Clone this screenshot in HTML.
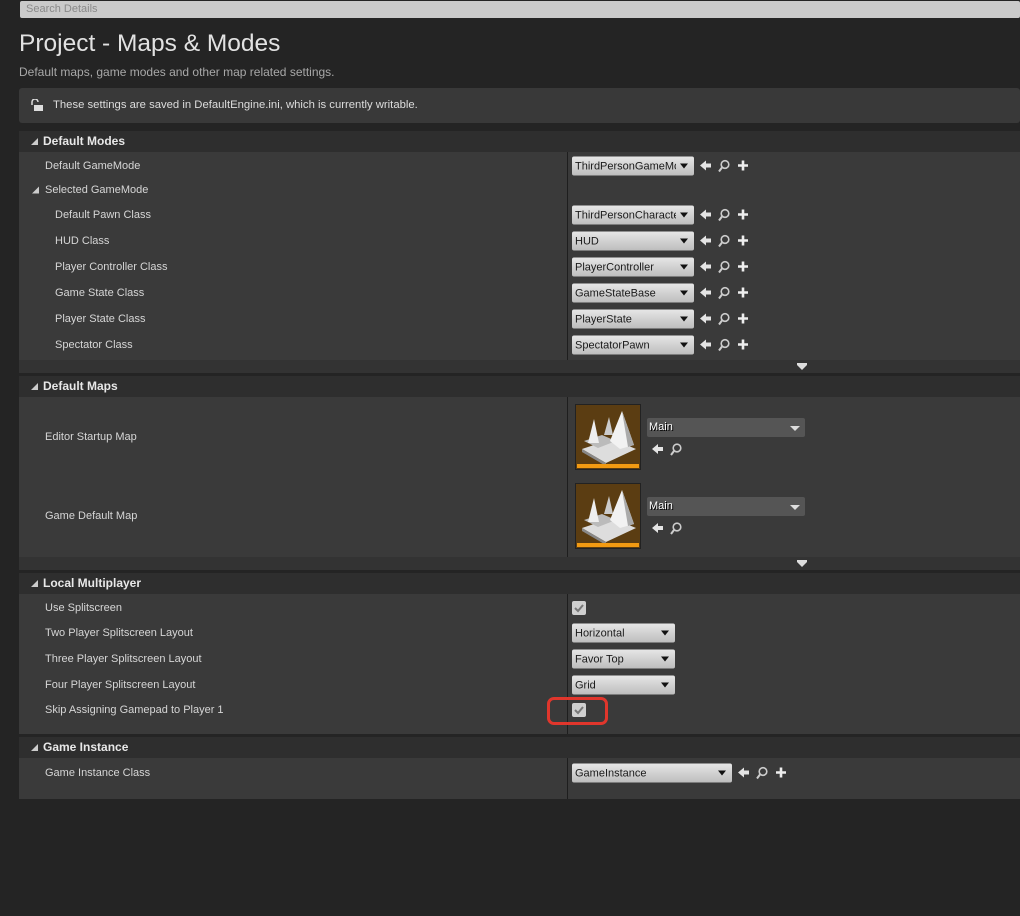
<!DOCTYPE html>
<html><head><meta charset="utf-8"><style>
*{margin:0;padding:0;box-sizing:border-box}
body{width:1020px;height:916px;background:#242424;font-family:"Liberation Sans",sans-serif;position:relative;overflow:hidden;color:#d8d8d8}
.a{position:absolute}
.lbl{position:absolute;font-size:11px;color:#d6d6d6;transform:translateY(-50%)}
.hdr{position:absolute;left:19px;width:1001px;height:21px;background:#2e2e2e;font-size:12px;font-weight:bold;color:#e8e8e8;padding-left:24px;line-height:21px}
.hdr:before{content:"";position:absolute;left:12px;top:7px;border-left:7px solid transparent;border-bottom:7px solid #ccc}
.tri{position:absolute;left:32px;border-left:7px solid transparent;border-bottom:7px solid #ccc;transform:translateY(-50%)}
.body{position:absolute;left:19px;width:1001px;background:#3a3a3a}
.div{position:absolute;left:567px;width:1px;background:#1e1e1e}
.foot{position:absolute;left:19px;width:1001px;height:13px;background:#333}
.foot:after{content:"";position:absolute;left:778px;top:5px;border-left:5px solid transparent;border-right:5px solid transparent;border-top:5px solid #ddd;box-shadow:0 -2px 0 #ddd}
.dd{position:absolute;height:19px;background:linear-gradient(#e6e6e6,#bdbdbd);border-radius:2px;font-size:11px;color:#1a1a1a;line-height:19px;padding:1px 0 0 3px;overflow:hidden;white-space:nowrap;transform:translateY(-50%)}
.dd:after{content:"";position:absolute;right:6px;top:7px;border-left:4.5px solid transparent;border-right:4.5px solid transparent;border-top:5px solid #111}
.dd span{display:block;width:calc(100% - 18px);overflow:hidden;line-height:18px}
.ic{position:absolute;transform:translateY(-50%)}
.map{position:absolute;width:66px;height:66px;background:#5b3d12;border:1px solid #222}
.map:after{content:"";position:absolute;left:1px;right:1px;bottom:1px;height:4px;background:#f29a12}
.mdd{position:absolute;left:647px;width:158px;height:19px;background:#555;border-radius:2px;font-size:11px;color:#fff;line-height:19px;padding-left:2px;text-shadow:1px 1px 0 #000}
.mdd:after{content:"";position:absolute;right:5px;top:8px;border-left:5px solid transparent;border-right:5px solid transparent;border-top:5px solid #ddd}
.cb{position:absolute;left:572px;width:14px;height:14px;background:#cfcfcf;border-radius:2px;transform:translateY(-50%)}
</style></head><body>
<div class="a" style="left:20px;top:1px;width:1000px;height:17px;background:#cacaca;border-radius:2px;font-size:11px;color:#8a8a8a;padding-left:6px;line-height:17px">Search Details</div>
<div class="a" style="left:19px;top:30px;font-size:24.5px;color:#e2e2e2">Project - Maps &amp; Modes</div>
<div class="a" style="left:19px;top:65px;font-size:12px;color:#a8a8a8">Default maps, game modes and other map related settings.</div>
<div class="a" style="left:19px;top:88px;width:1001px;height:35px;background:#393939;border-radius:3px"></div>
<svg class="a" style="left:30px;top:99px" width="14" height="13"><path d="M2 6V3a3 3 0 0 1 6 0" stroke="#ddd" stroke-width="1.5" fill="none"/><rect x="4" y="6" width="9" height="6" fill="#ddd"/></svg>
<div class="a" style="left:53px;top:99px;font-size:11.3px;color:#ddd">These settings are saved in DefaultEngine.ini, which is currently writable.</div>

<svg width="0" height="0" style="position:absolute"><defs>
<g id="icons"><path d="M0 6l6-5v3h5v4H6v3z" fill="#e4e4e4"/><circle cx="25" cy="5" r="3.8" stroke="#ccc" stroke-width="1.6" fill="none"/><path d="M22 8l-3 4" stroke="#ccc" stroke-width="2"/><path d="M38 6h10M43 1v10" stroke="#eee" stroke-width="2.6"/></g>
<g id="icons2"><path d="M0 6l6-5v3h5v4H6v3z" fill="#e4e4e4"/><circle cx="25" cy="5" r="3.8" stroke="#ccc" stroke-width="1.6" fill="none"/><path d="M22 8l-3 4" stroke="#ccc" stroke-width="2"/></g>
<g id="mp"><rect width="64" height="64" fill="#5b3d12"/><path d="M6 44l30-10 24 10-30 14z" fill="#ddd"/><path d="M6 44l24 14v3L6 47z" fill="#888"/><path d="M8 36l18-6 14 6-18 7z" fill="#bbb"/><path d="M12 38l6-24 5 24z" fill="#eee"/><path d="M28 30l5-18 4 18z" fill="#ccc"/><path d="M34 36l12-30 12 34-14 4z" fill="#f2f2f2"/><path d="M46 6l12 34-6 2z" fill="#aaa"/></g>
</defs></svg>

<!-- Default Modes -->
<div class="hdr" style="top:131px">Default Modes</div>
<div class="body" style="top:152px;height:208px"></div>
<div class="div" style="top:152px;height:208px"></div>
<div class="foot" style="top:360px"></div>
<div class="lbl" style="left:45px;top:166px">Default GameMode</div>
<div class="tri" style="top:190px"></div>
<div class="lbl" style="left:45px;top:190px">Selected GameMode</div>
<div class="lbl" style="left:55px;top:215px">Default Pawn Class</div>
<div class="lbl" style="left:55px;top:241px">HUD Class</div>
<div class="lbl" style="left:55px;top:267px">Player Controller Class</div>
<div class="lbl" style="left:55px;top:293px">Game State Class</div>
<div class="lbl" style="left:55px;top:319px">Player State Class</div>
<div class="lbl" style="left:55px;top:345px">Spectator Class</div>
<div class="dd" style="left:572px;top:166px;width:122px"><span>ThirdPersonGameMode</span></div>
<div class="dd" style="left:572px;top:215px;width:122px"><span>ThirdPersonCharacter</span></div>
<div class="dd" style="left:572px;top:241px;width:122px"><span>HUD</span></div>
<div class="dd" style="left:572px;top:267px;width:122px"><span>PlayerController</span></div>
<div class="dd" style="left:572px;top:293px;width:122px"><span>GameStateBase</span></div>
<div class="dd" style="left:572px;top:319px;width:122px"><span>PlayerState</span></div>
<div class="dd" style="left:572px;top:345px;width:122px"><span>SpectatorPawn</span></div>
<svg class="ic" style="left:700px;top:166px" width="52" height="13"><use href="#icons"/></svg>
<svg class="ic" style="left:700px;top:215px" width="52" height="13"><use href="#icons"/></svg>
<svg class="ic" style="left:700px;top:241px" width="52" height="13"><use href="#icons"/></svg>
<svg class="ic" style="left:700px;top:267px" width="52" height="13"><use href="#icons"/></svg>
<svg class="ic" style="left:700px;top:293px" width="52" height="13"><use href="#icons"/></svg>
<svg class="ic" style="left:700px;top:319px" width="52" height="13"><use href="#icons"/></svg>
<svg class="ic" style="left:700px;top:345px" width="52" height="13"><use href="#icons"/></svg>

<!-- Default Maps -->
<div class="hdr" style="top:376px">Default Maps</div>
<div class="body" style="top:397px;height:160px"></div>
<div class="div" style="top:397px;height:160px"></div>
<div class="foot" style="top:557px"></div>
<div class="lbl" style="left:45px;top:437px">Editor Startup Map</div>
<div class="lbl" style="left:45px;top:516px">Game Default Map</div>
<div class="map" style="left:575px;top:404px"><svg width="64" height="64"><use href="#mp"/></svg></div>
<div class="map" style="left:575px;top:483px"><svg width="64" height="64"><use href="#mp"/></svg></div>
<div class="mdd" style="top:418px">Main</div>
<div class="mdd" style="top:497px">Main</div>
<svg class="a" style="left:652px;top:443px" width="40" height="13"><use href="#icons2"/></svg>
<svg class="a" style="left:652px;top:522px" width="40" height="13"><use href="#icons2"/></svg>

<!-- Local Multiplayer -->
<div class="hdr" style="top:573px">Local Multiplayer</div>
<div class="body" style="top:594px;height:140px"></div>
<div class="div" style="top:594px;height:140px"></div>
<div class="lbl" style="left:45px;top:608px">Use Splitscreen</div>
<div class="lbl" style="left:45px;top:633px">Two Player Splitscreen Layout</div>
<div class="lbl" style="left:45px;top:659px">Three Player Splitscreen Layout</div>
<div class="lbl" style="left:45px;top:685px">Four Player Splitscreen Layout</div>
<div class="lbl" style="left:45px;top:710px">Skip Assigning Gamepad to Player 1</div>
<div class="cb" style="top:608px"><svg width="14" height="14"><path d="M3 7l3 3 5-6" stroke="#777" stroke-width="2" fill="none"/></svg></div>
<div class="cb" style="top:710px"><svg width="14" height="14"><path d="M3 7l3 3 5-6" stroke="#777" stroke-width="2" fill="none"/></svg></div>
<div class="dd" style="left:572px;top:633px;width:103px"><span>Horizontal</span></div>
<div class="dd" style="left:572px;top:659px;width:103px"><span>Favor Top</span></div>
<div class="dd" style="left:572px;top:685px;width:103px"><span>Grid</span></div>
<div class="a" style="left:547px;top:697px;width:61px;height:28px;border:3px solid #e0362c;border-radius:7px"></div>

<!-- Game Instance -->
<div class="hdr" style="top:737px">Game Instance</div>
<div class="body" style="top:758px;height:41px"></div>
<div class="div" style="top:758px;height:41px"></div>
<div class="lbl" style="left:45px;top:773px">Game Instance Class</div>
<div class="dd" style="left:572px;top:773px;width:160px"><span>GameInstance</span></div>
<svg class="ic" style="left:738px;top:773px" width="52" height="13"><use href="#icons"/></svg>
</body></html>
